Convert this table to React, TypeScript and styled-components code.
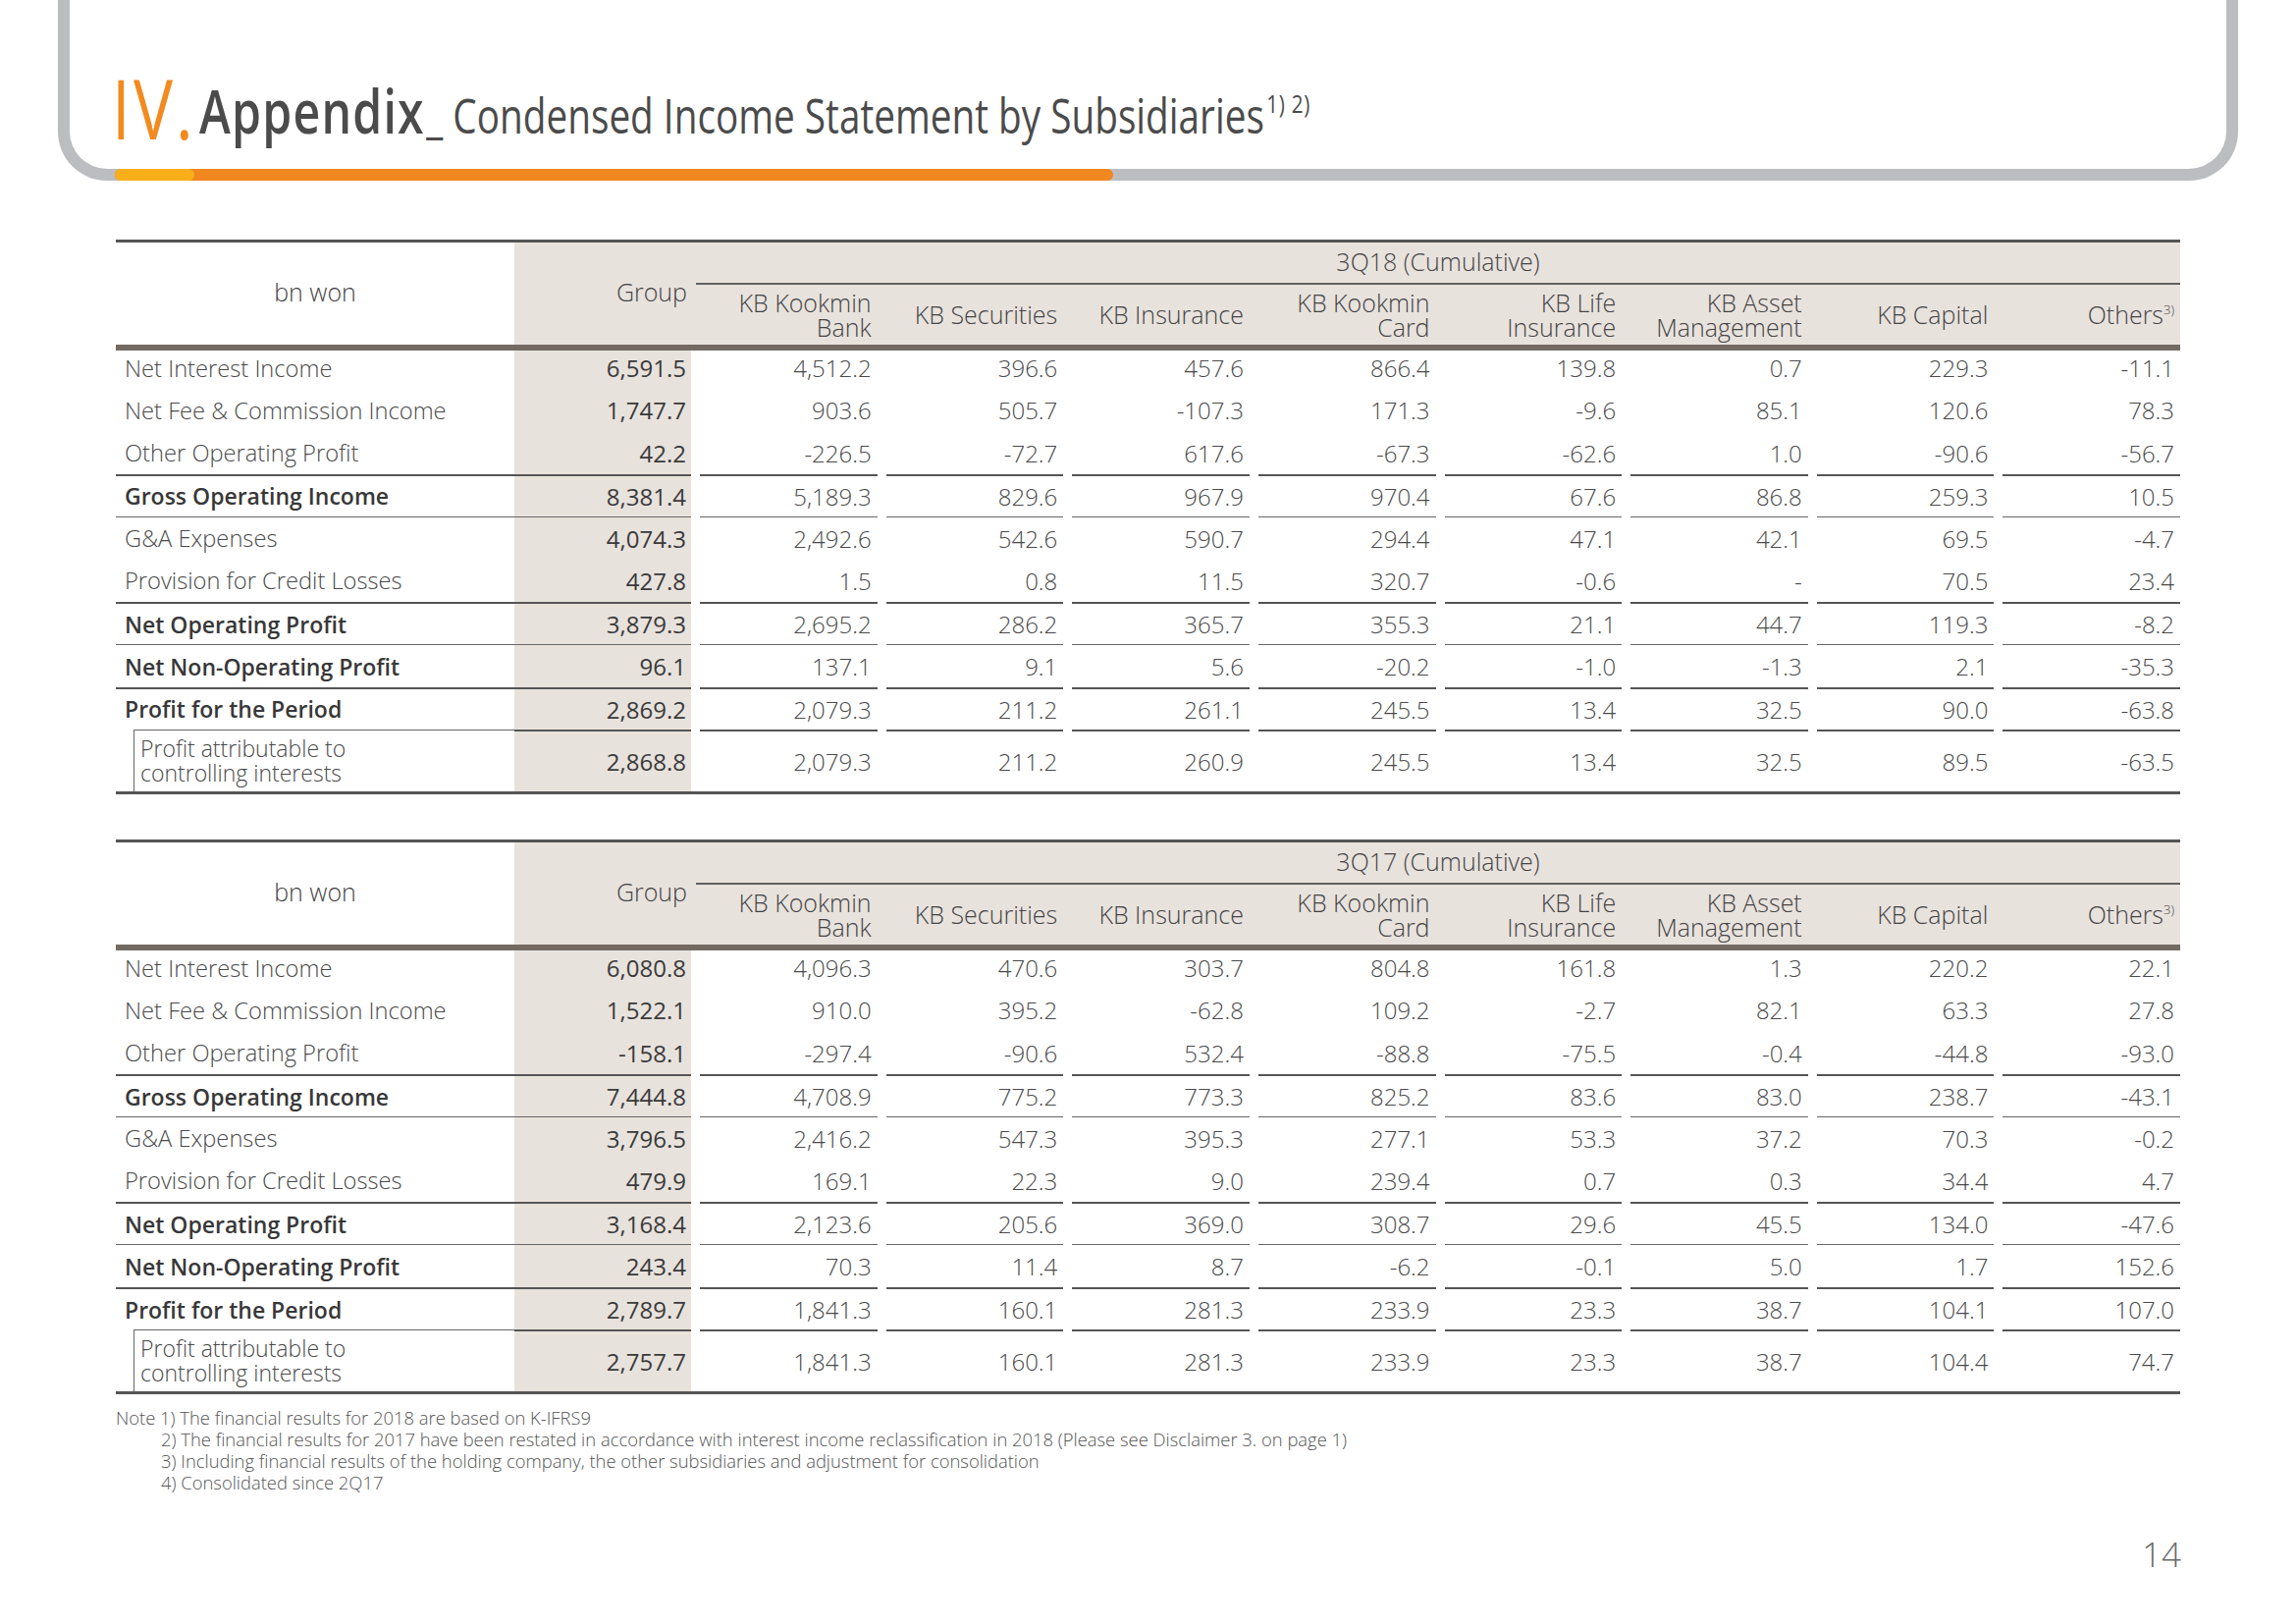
import React from 'react';
import styled, { createGlobalStyle } from 'styled-components';

const GlobalStyle = createGlobalStyle`
  html, body { margin: 0; padding: 0; background: #ffffff; }
  body {
    font-family: "Open Sans", "Noto Sans", "Liberation Sans", sans-serif;
    color: #4a4a4a;
  }
  * { box-sizing: border-box; }
`;

const BEIGE = '#e8e2dd';
const COLS = '406px 180px repeat(8, 1fr)';

type Line = 'none' | 'thin' | 'thick';
const lineValue = (l: Line) =>
  l === 'thick' ? '2px solid #555555' : l === 'thin' ? '1px solid #666666' : 'none';

const Page = styled.div`
  width: 2339px;
  height: 1654px;
  overflow: hidden;
  display: flex;
  flex-direction: column;
`;

const Frame = styled.header`
  position: relative;
  flex: none;
  margin-left: 59px;
  width: 2221px;
  height: 184px;
  border: 12px solid #bcbdc0;
  border-top: none;
  border-radius: 0 0 50px 50px;
  padding: 67px 0 0 43px;
`;

const Title = styled.h1`
  margin: 0;
  font-size: 85px;
  line-height: 1;
  font-weight: 400;
  white-space: nowrap;
  transform: scaleX(0.79);
  transform-origin: left center;
`;

const Roman = styled.span`
  color: #f28a1f;
  letter-spacing: 4px;
`;

const Section = styled.span`
  font-size: 61px;
  font-weight: 600;
  letter-spacing: 1.5px;
  color: #4b4b4b;
  margin-left: 4px;
  vertical-align: 6px;
`;

const Subtitle = styled.span`
  font-size: 49px;
  font-weight: 400;
  color: #4b4b4b;
  margin-left: 2px;
  vertical-align: 6px;
`;

const TitleSup = styled.sup`
  font-size: 26px;
  line-height: 1;
  letter-spacing: 1px;
  vertical-align: 27px;
  margin-left: 3px;
  color: #4b4b4b;
`;

const Bar = styled.div`
  position: absolute;
  left: 46px;
  bottom: -12px;
  width: 1017px;
  height: 12px;
  border-radius: 6px;
  background: #f1871f;
`;

const BarTip = styled.div`
  width: 81px;
  height: 100%;
  border-radius: 6px;
  background: #f9ae1a;
`;

const Table = styled.section<{ $top: number }>`
  flex: none;
  margin: ${(p) => p.$top}px 0 0 118px;
  width: 2103px;
  border-top: 3px solid #555555;
  border-bottom: 3px solid #555555;
`;

const Head = styled.div`
  display: grid;
  grid-template-columns: ${COLS};
  grid-template-rows: 43px 61px;
  background: ${BEIGE};
  border-bottom: 6px solid #736b63;
  font-size: 25px;
  font-weight: 300;
  color: #444444;
`;

const UnitHead = styled.div`
  grid-row: 1 / span 2;
  grid-column: 1;
  background: #ffffff;
  display: flex;
  align-items: center;
  justify-content: center;
  padding-bottom: 5px;
`;

const GroupHead = styled.div`
  grid-row: 1 / span 2;
  grid-column: 2;
  display: flex;
  align-items: center;
  justify-content: flex-end;
  padding: 0 4px 5px 0;
`;

const PeriodHead = styled.div`
  grid-row: 1;
  grid-column: 3 / -1;
  margin-left: 5px;
  border-bottom: 2px solid #5f5f5f;
  display: flex;
  align-items: center;
  justify-content: center;
  padding-bottom: 4px;
`;

const SubHead = styled.div`
  grid-row: 2;
  margin-left: 9px;
  padding-right: 6px;
  display: flex;
  flex-direction: column;
  justify-content: center;
  align-items: flex-end;
  text-align: right;
  line-height: 25px;
`;

const HeadLine = styled.span`
  display: block;
  height: 25px;
  white-space: nowrap;
`;

const NoteSup = styled.sup`
  font-size: 13px;
  line-height: 1;
  vertical-align: 10px;
`;

const Row = styled.div<{ $h: number }>`
  display: grid;
  grid-template-columns: ${COLS};
  height: ${(p) => p.$h}px;
`;

const Cell = styled.div<{ $line: Line; $first?: boolean }>`
  display: flex;
  align-items: center;
  border-top: ${(p) => lineValue(p.$line)};
  padding-bottom: ${(p) => (p.$first ? 4 : 0)}px;
  font-size: 24px;
  white-space: nowrap;
`;

const LabelCell = styled(Cell)<{ $bold?: boolean }>`
  padding-left: 9px;
  font-size: ${(p) => (p.$bold ? 23 : 23.7)}px;
  font-weight: ${(p) => (p.$bold ? 600 : 300)};
  color: ${(p) => (p.$bold ? '#383838' : '#4a4a4a')};
`;

const AttrLabel = styled.div`
  margin-left: 18px;
  border-left: 1px solid #666666;
  border-top: 1px solid #666666;
  padding-left: 6px;
  display: flex;
  align-items: center;
  font-size: 23px;
  line-height: 25px;
  font-weight: 300;
  color: #4a4a4a;
`;

const GroupCell = styled(Cell)`
  justify-content: flex-end;
  padding-right: 5px;
  background: ${BEIGE};
  font-weight: 400;
  color: #3a3a3a;
`;

const ValueCell = styled(Cell)`
  justify-content: flex-end;
  margin-left: 9px;
  padding-right: 6px;
  font-weight: 300;
  color: #4a4a4a;
`;

const Notes = styled.div`
  flex: none;
  margin: 13px 0 0 118px;
  font-size: 18.4px;
  line-height: 22px;
  font-weight: 300;
  color: #555555;
`;

const NoteLine = styled.div<{ $indent?: boolean }>`
  padding-left: ${(p) => (p.$indent ? 46 : 0)}px;
  white-space: nowrap;
`;

const PageNo = styled.div`
  flex: none;
  align-self: flex-end;
  margin: 44px 117px 0 0;
  font-size: 35px;
  line-height: 1;
  font-weight: 300;
  color: #6b6b6b;
`;

type RowKind = 'normal' | 'attr';
interface RowData {
  label: string;
  bold?: boolean;
  line: Line;
  kind?: RowKind;
  vals: string[];
}

const LABELS: { label: string; bold?: boolean; line: Line; kind?: RowKind }[] = [
  { label: 'Net Interest Income', line: 'none' },
  { label: 'Net Fee & Commission Income', line: 'none' },
  { label: 'Other Operating Profit', line: 'none' },
  { label: 'Gross Operating Income', bold: true, line: 'thick' },
  { label: 'G&A Expenses', line: 'thin' },
  { label: 'Provision for Credit Losses', line: 'none' },
  { label: 'Net Operating Profit', bold: true, line: 'thick' },
  { label: 'Net Non-Operating Profit', bold: true, line: 'thin' },
  { label: 'Profit for the Period', bold: true, line: 'thick' },
  { label: 'Profit attributable to controlling interests', line: 'thick', kind: 'attr' },
];

const build = (values: string[][]): RowData[] =>
  LABELS.map((l, i) => ({ ...l, vals: values[i] }));

const DATA_3Q18 = build([
  ['6,591.5', '4,512.2', '396.6', '457.6', '866.4', '139.8', '0.7', '229.3', '-11.1'],
  ['1,747.7', '903.6', '505.7', '-107.3', '171.3', '-9.6', '85.1', '120.6', '78.3'],
  ['42.2', '-226.5', '-72.7', '617.6', '-67.3', '-62.6', '1.0', '-90.6', '-56.7'],
  ['8,381.4', '5,189.3', '829.6', '967.9', '970.4', '67.6', '86.8', '259.3', '10.5'],
  ['4,074.3', '2,492.6', '542.6', '590.7', '294.4', '47.1', '42.1', '69.5', '-4.7'],
  ['427.8', '1.5', '0.8', '11.5', '320.7', '-0.6', '-', '70.5', '23.4'],
  ['3,879.3', '2,695.2', '286.2', '365.7', '355.3', '21.1', '44.7', '119.3', '-8.2'],
  ['96.1', '137.1', '9.1', '5.6', '-20.2', '-1.0', '-1.3', '2.1', '-35.3'],
  ['2,869.2', '2,079.3', '211.2', '261.1', '245.5', '13.4', '32.5', '90.0', '-63.8'],
  ['2,868.8', '2,079.3', '211.2', '260.9', '245.5', '13.4', '32.5', '89.5', '-63.5'],
]);

const DATA_3Q17 = build([
  ['6,080.8', '4,096.3', '470.6', '303.7', '804.8', '161.8', '1.3', '220.2', '22.1'],
  ['1,522.1', '910.0', '395.2', '-62.8', '109.2', '-2.7', '82.1', '63.3', '27.8'],
  ['-158.1', '-297.4', '-90.6', '532.4', '-88.8', '-75.5', '-0.4', '-44.8', '-93.0'],
  ['7,444.8', '4,708.9', '775.2', '773.3', '825.2', '83.6', '83.0', '238.7', '-43.1'],
  ['3,796.5', '2,416.2', '547.3', '395.3', '277.1', '53.3', '37.2', '70.3', '-0.2'],
  ['479.9', '169.1', '22.3', '9.0', '239.4', '0.7', '0.3', '34.4', '4.7'],
  ['3,168.4', '2,123.6', '205.6', '369.0', '308.7', '29.6', '45.5', '134.0', '-47.6'],
  ['243.4', '70.3', '11.4', '8.7', '-6.2', '-0.1', '5.0', '1.7', '152.6'],
  ['2,789.7', '1,841.3', '160.1', '281.3', '233.9', '23.3', '38.7', '104.1', '107.0'],
  ['2,757.7', '1,841.3', '160.1', '281.3', '233.9', '23.3', '38.7', '104.4', '74.7'],
]);

const SUB_HEADS: { lines: string[]; sup?: string }[] = [
  { lines: ['KB Kookmin', 'Bank'] },
  { lines: ['KB Securities'] },
  { lines: ['KB Insurance'] },
  { lines: ['KB Kookmin', 'Card'] },
  { lines: ['KB Life', 'Insurance'] },
  { lines: ['KB Asset', 'Management'] },
  { lines: ['KB Capital'] },
  { lines: ['Others'], sup: '3)' },
];

const rowHeight = (i: number, kind?: RowKind) => (i === 0 ? 39 : kind === 'attr' ? 63 : 43.4);

function IncomeTable({ period, rows, top }: { period: string; rows: RowData[]; top: number }) {
  return (
    <Table $top={top}>
      <Head>
        <UnitHead>bn won</UnitHead>
        <GroupHead>Group</GroupHead>
        <PeriodHead>{period}</PeriodHead>
        {SUB_HEADS.map((h, i) => (
          <SubHead key={i}>
            {h.lines.map((l, j) => (
              <HeadLine key={j}>
                {l}
                {h.sup && j === h.lines.length - 1 ? <NoteSup>{h.sup}</NoteSup> : null}
              </HeadLine>
            ))}
          </SubHead>
        ))}
      </Head>
      {rows.map((r, i) => (
        <Row key={r.label} $h={rowHeight(i, r.kind)}>
          {r.kind === 'attr' ? (
            <AttrLabel>
              Profit attributable to
              <br />
              controlling interests
            </AttrLabel>
          ) : (
            <LabelCell $line={r.line} $bold={r.bold} $first={i === 0}>
              {r.label}
            </LabelCell>
          )}
          <GroupCell $line={r.line} $first={i === 0}>
            {r.vals[0]}
          </GroupCell>
          {r.vals.slice(1).map((v, j) => (
            <ValueCell key={j} $line={r.line} $first={i === 0}>
              {v}
            </ValueCell>
          ))}
        </Row>
      ))}
    </Table>
  );
}

export default function App() {
  return (
    <>
      <GlobalStyle />
      <Page>
        <Frame>
          <Title>
            <Roman>IV.</Roman>
            <Section>Appendix</Section>
            <Subtitle>_ Condensed Income Statement by Subsidiaries</Subtitle>
            <TitleSup>1) 2)</TitleSup>
          </Title>
          <Bar>
            <BarTip />
          </Bar>
        </Frame>
        <IncomeTable period="3Q18 (Cumulative)" rows={DATA_3Q18} top={60} />
        <IncomeTable period="3Q17 (Cumulative)" rows={DATA_3Q17} top={46} />
        <Notes>
          <NoteLine>Note 1) The financial results for 2018 are based on K-IFRS9</NoteLine>
          <NoteLine $indent>
            2) The financial results for 2017 have been restated in accordance with interest income
            reclassification in 2018 (Please see Disclaimer 3. on page 1)
          </NoteLine>
          <NoteLine $indent>
            3) Including financial results of the holding company, the other subsidiaries and adjustment
            for consolidation
          </NoteLine>
          <NoteLine $indent>4) Consolidated since 2Q17</NoteLine>
        </Notes>
        <PageNo>14</PageNo>
      </Page>
    </>
  );
}
